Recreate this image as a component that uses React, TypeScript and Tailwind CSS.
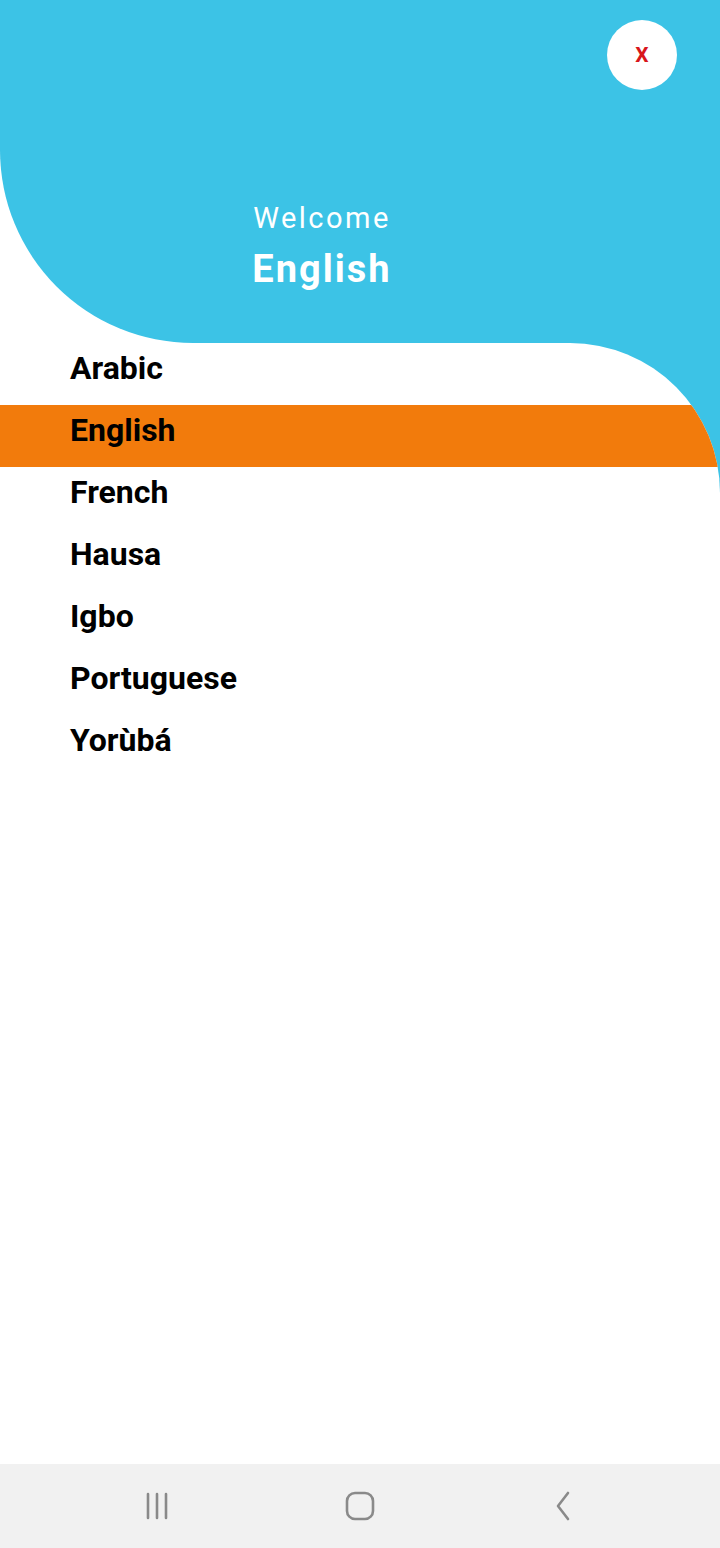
import React, { useState } from 'react';

const LANGUAGES = ['Arabic', 'English', 'French', 'Hausa', 'Igbo', 'Portuguese', 'Yorùbá'];

const font = { fontFamily: 'Roboto, "Noto Sans", sans-serif' };

export default function App() {
  const [selected, setSelected] = useState('English');

  return (
    <div className="w-[720px] h-[1548px] flex flex-col bg-white overflow-hidden" style={font}>
      {/* Header */}
      <div className="h-[343px] shrink-0 bg-[#3cc3e6] rounded-bl-[193px] flex flex-col">
        <div className="flex justify-end pt-[20px] pr-[43px]">
          <button className="w-[70px] h-[70px] rounded-full bg-white flex items-center justify-center text-[#d8161c] text-[21px] font-bold leading-none">
            X
          </button>
        </div>
        <div className="flex flex-col items-center w-[644px] mt-[111px]">
          <p className="text-white text-[29px] font-normal tracking-[2.5px] leading-[34px]">Welcome</p>
          <p className="text-white text-[38px] font-bold tracking-[2px] leading-[44px] mt-[12px]">{selected}</p>
        </div>
      </div>

      {/* Language list */}
      <div className="flex-1 bg-[#3cc3e6]">
        <div className="h-full bg-white rounded-tr-[150px] overflow-hidden">
          {LANGUAGES.map((lang) => (
            <button
              key={lang}
              onClick={() => setSelected(lang)}
              className={`w-full h-[62px] flex items-center pl-[70px] pb-[13px] text-left text-[32px] leading-[38px] font-bold text-black ${
                selected === lang ? 'bg-[#f27b0c]' : 'bg-transparent'
              }`}
            >
              {lang}
            </button>
          ))}
        </div>
      </div>

      {/* Android nav bar */}
      <div className="h-[84px] shrink-0 bg-[#f1f1f1] flex items-center justify-around px-[56px]">
        <div className="w-[202px] flex justify-center">
          <svg width="28" height="28" viewBox="0 0 28 28" fill="none" stroke="#8a8a8a" strokeWidth="2.6" strokeLinecap="round">
            <path d="M5 2v24M14 2v24M23 2v24" />
          </svg>
        </div>
        <div className="w-[202px] flex justify-center">
          <svg width="30" height="30" viewBox="0 0 30 30" fill="none" stroke="#8a8a8a" strokeWidth="2.6">
            <rect x="2" y="2" width="26" height="26" rx="8" />
          </svg>
        </div>
        <div className="w-[202px] flex justify-center">
          <svg width="16" height="30" viewBox="0 0 16 30" fill="none" stroke="#8a8a8a" strokeWidth="2.6" strokeLinecap="round" strokeLinejoin="round">
            <path d="M13 2L3 15l10 13" />
          </svg>
        </div>
      </div>
    </div>
  );
}
